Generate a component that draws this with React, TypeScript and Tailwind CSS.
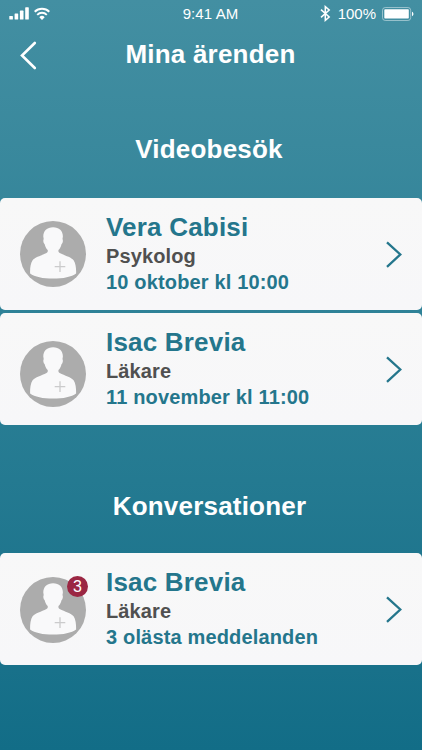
import React from "react";
import { clsx } from "clsx";

interface CaseItem {
  name: string;
  role: string;
  info: string;
  unread?: number;
  avatarClass?: string;
}

const visits: CaseItem[] = [
  { name: "Vera Cabisi", role: "Psykolog", info: "10 oktober kl 10:00" },
  { name: "Isac Brevia", role: "Läkare", info: "11 november kl 11:00", avatarClass: "mt-[28.7px]" },
];

const conversations: CaseItem[] = [
  { name: "Isac Brevia", role: "Läkare", info: "3 olästa meddelanden", unread: 3 },
];

const StatusBar = () => (
  <div className="flex h-7 items-center text-[15px] text-white">
    <div className="flex flex-1 items-center pl-[9px]">
      <svg width="20" height="14" viewBox="0 0 20 14" fill="currentColor">
        <rect x="0.3" y="9" width="3.6" height="3.6" rx="0.6" />
        <rect x="5.6" y="6.4" width="3.6" height="6.2" rx="0.6" />
        <rect x="10.9" y="3.6" width="3.6" height="9" rx="0.6" />
        <rect x="16.2" y="0.3" width="3.6" height="12.3" rx="0.6" />
      </svg>
      <svg className="ml-[5px]" width="16" height="14" viewBox="0 0 16 14" fill="none" stroke="currentColor" strokeWidth="1.9">
        <path d="M0.7 4.7a10.4 10.4 0 0 1 14.6 0" />
        <path d="M3.2 7.8a6.8 6.8 0 0 1 9.6 0" />
        <path d="M5.3 10.2a3.8 3.8 0 0 1 5.4 0L8 13z" fill="currentColor" stroke="none" />
      </svg>
    </div>
    <span className="pr-[2px] tracking-[0.1px]">9:41 AM</span>
    <div className="flex flex-1 items-center justify-end pr-[8px]">
      <svg className="mb-px" width="11" height="17" viewBox="0 0 11 17" fill="none" stroke="currentColor" strokeWidth="1.5">
        <path d="M1 4.6l8.2 7.4-3.9 3.4V1.6l3.9 3.4L1 12.4" />
      </svg>
      <span className="ml-[7px]">100%</span>
      <svg className="ml-[6px]" width="32" height="14" viewBox="0 0 32 14">
        <rect x="0.5" y="0.5" width="28.2" height="13" rx="2.8" fill="none" stroke="currentColor" strokeOpacity="0.45" />
        <rect x="2.3" y="2.3" width="24.5" height="9.2" rx="0.8" fill="currentColor" />
        <path d="M30 4.8c1.9 0.7 1.9 3.7 0 4.4z" fill="currentColor" />
      </svg>
    </div>
  </div>
);

const Avatar = ({ unread }: { unread?: number }) => (
  <div className="relative">
    <svg className="block" width="66" height="66" viewBox="0 0 66 66">
      <circle cx="33" cy="33" r="33" fill="#acacac" />
      <path
        d="M33.1 6.3C27 6.3 23.3 10 23.3 15.5L23.7 18C22.9 19.4 23.4 22.2 24.7 23.2C25.200 25.8 26.300 27.600 27.700 28.900C28 30.400 27.700 31.300 26.500 32C21.500 34.700 15 36 12.600 39.300C10.600 42.300 9.900 47 10.100 52.500C14.500 55.900 23 57.600 33.100 57.600S51.700 55.900 56.100 52.500C56.300 47 55.600 42.300 53.600 39.300C51.200 36 44.700 34.700 39.700 32C38.500 31.300 38.200 30.400 38.500 28.900C39.900 27.600 41 25.800 41.500 23.200C42.800 22.200 43.300 19.400 42.500 18L42.900 15.500C42.900 10 39.200 6.300 33.100 6.300Z"
        fill="#f9f9fa"
      />
      <path d="M40 40.3v10.6M34.700 45.600h10.600" stroke="#cbcbcc" strokeWidth="1.3" />
    </svg>
    {unread && (
      <span className="absolute -top-px left-[47px] flex h-[21px] w-[21px] items-center justify-center rounded-full bg-[#9b2743] pt-px text-[16px] leading-none font-normal text-white">
        {unread}
      </span>
    )}
  </div>
);

const CaseCard = ({ item }: { item: CaseItem }) => (
  <button className="flex h-28 w-full items-start rounded-[5px] bg-gradient-to-b from-[#f8f8f8] to-[#f7f7f9] pl-5 text-left font-bold">
    <div className={clsx("shrink-0", item.avatarClass ?? "mt-[23.4px]")}>
      <Avatar unread={item.unread} />
    </div>
    <div className="ml-5 flex-1 pt-[14px] whitespace-nowrap text-[#24768c]">
      <div className="text-[26px] leading-[30px] tracking-[0.2px]">{item.name}</div>
      <div className="pt-px text-[20px] leading-[26px] tracking-[0.12px] text-[#505050]">{item.role}</div>
      <div className="text-[20px] leading-[26px] tracking-[0.16px]">{item.info}</div>
    </div>
    <svg className="mt-[43px] mr-[19px]" width="18" height="27" viewBox="0 0 18 27" fill="none" stroke="#24768c" strokeWidth="2.3">
      <path d="M2 1.4L15.3 13.5 2 25.8" />
    </svg>
  </button>
);

export default function App() {
  return (
    <main className="flex h-[750px] w-full flex-col overflow-hidden bg-gradient-to-b from-[#438fa2] via-[#2a7f95] to-[#126d87] font-['Liberation_Sans',Arial,sans-serif]">
      <StatusBar />
      <header className="flex h-[53px] items-center text-white">
        <button className="w-14 pt-[2px] pl-5" aria-label="Tillbaka">
          <svg width="18" height="29" viewBox="0 0 18 29" fill="none" stroke="currentColor" strokeWidth="2.6" strokeLinecap="round">
            <path d="M14.8 2L2 14.5 14.8 27" />
          </svg>
        </button>
        <h1 className="flex-1 pr-[57px] text-center text-[26px] font-bold tracking-[0.2px]">Mina ärenden</h1>
      </header>
      <section className="pt-[48px]">
        <h2 className="h-[69px] pr-[4px] text-center text-[26px] leading-10 font-bold tracking-[0.2px] text-white">Videobesök</h2>
        <div className="flex flex-col gap-[2.6px]">
          {visits.map((item) => (
            <CaseCard key={item.info} item={item} />
          ))}
        </div>
      </section>
      <section className="pt-[61px]">
        <h2 className="h-[67.8px] pr-[3px] text-center text-[26px] leading-10 font-bold tracking-[0.2px] text-white">Konversationer</h2>
        {conversations.map((item) => (
          <CaseCard key={item.info} item={item} />
        ))}
      </section>
    </main>
  );
}
